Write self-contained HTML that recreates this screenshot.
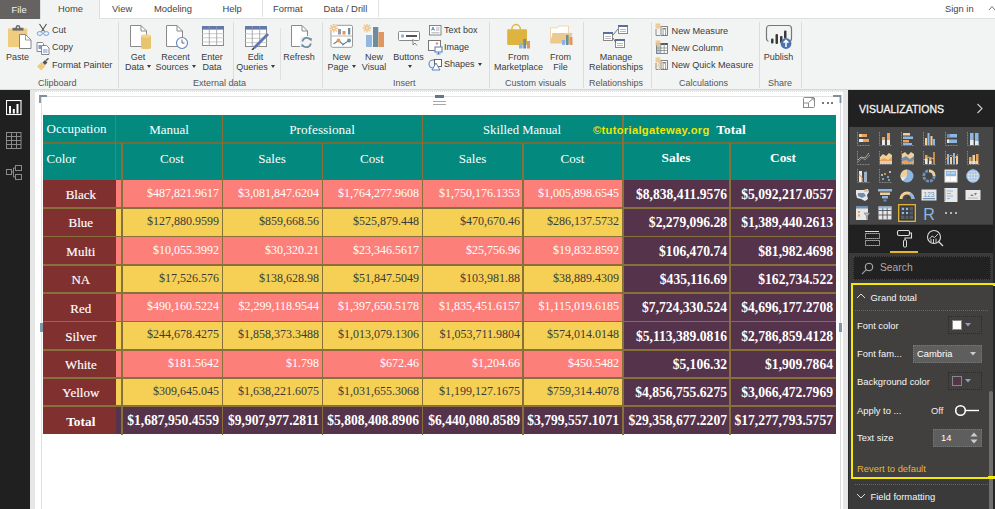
<!DOCTYPE html><html><head><meta charset="utf-8"><style>
*{margin:0;padding:0;box-sizing:border-box}
html,body{width:995px;height:509px;overflow:hidden;background:#fff;position:relative}
body{font-family:"Liberation Sans",sans-serif;color:#333}
.ab{position:absolute}
.t{position:absolute;white-space:nowrap;line-height:1}
.rb{font-size:9px;color:#3b3b3b}
.ser{font-family:"Liberation Serif",serif}
</style></head><body>
<div class="ab" style="left:0;top:0;width:995px;height:19px;background:#fff;border-bottom:1px solid #dde0e0"></div>
<div class="ab" style="left:0;top:0;width:40.5px;height:18.5px;background:#666262"></div>
<div class="t" style="left:11.5px;top:4.5px;font-size:9.4px;color:#f4f4f4">File</div>
<div class="ab" style="left:40px;top:0;width:60px;height:20px;background:#f2f4f4;border-left:1px solid #dde0e0;border-right:1px solid #dde0e0"></div>
<div class="t" style="left:58px;top:4px;font-size:9.4px;color:#444">Home</div>
<div class="t" style="left:112px;top:4px;font-size:9.4px;color:#444">View</div>
<div class="t" style="left:154px;top:4px;font-size:9.4px;color:#444">Modeling</div>
<div class="t" style="left:222.5px;top:4px;font-size:9.4px;color:#444">Help</div>
<div class="t" style="left:273px;top:4px;font-size:9.4px;color:#444">Format</div>
<div class="t" style="left:323.5px;top:4px;font-size:9.4px;color:#444">Data / Drill</div>
<div class="ab" style="left:262px;top:0;width:1px;height:17px;background:#e2e2e2"></div>
<div class="ab" style="left:378px;top:0;width:1px;height:17px;background:#e2e2e2"></div>
<div class="t" style="left:945px;top:3.5px;font-size:9.4px;color:#444">Sign in</div>
<svg class="ab" style="left:988px;top:5px" width="8" height="6"><path d="M1 5 L4 1.5 L7 5" stroke="#777" fill="none" stroke-width="1"/></svg>
<div class="ab" style="left:0;top:19px;width:995px;height:71px;background:#f2f4f4;border-bottom:1px solid #d6d8d8"></div>
<div class="ab" style="left:118px;top:22px;width:1px;height:66px;background:#dcdcdc"></div>
<div class="ab" style="left:232.5px;top:22px;width:1px;height:66px;background:#dcdcdc"></div>
<div class="ab" style="left:321.5px;top:22px;width:1px;height:66px;background:#dcdcdc"></div>
<div class="ab" style="left:488.5px;top:22px;width:1px;height:66px;background:#dcdcdc"></div>
<div class="ab" style="left:583px;top:22px;width:1px;height:66px;background:#dcdcdc"></div>
<div class="ab" style="left:650.5px;top:22px;width:1px;height:66px;background:#dcdcdc"></div>
<div class="ab" style="left:759px;top:22px;width:1px;height:66px;background:#dcdcdc"></div>
<div class="ab" style="left:801px;top:22px;width:1px;height:66px;background:#dcdcdc"></div>
<div class="ab" style="left:279.5px;top:28px;width:1px;height:52px;background:#e0e0e0"></div>
<div class="t rb" style="left:38px;top:78.6px;color:#555">Clipboard</div>
<div class="t rb" style="left:193px;top:78.6px;color:#555">External data</div>
<div class="t rb" style="left:393px;top:78.6px;color:#555">Insert</div>
<div class="t rb" style="left:505px;top:78.6px;color:#555">Custom visuals</div>
<div class="t rb" style="left:589px;top:78.6px;color:#555">Relationships</div>
<div class="t rb" style="left:679px;top:78.6px;color:#555">Calculations</div>
<div class="t rb" style="left:768px;top:78.6px;color:#555">Share</div>
<div class="t rb" style="left:-32.5px;width:100px;text-align:center;top:52.5px">Paste</div>
<div class="t rb" style="left:88px;width:100px;text-align:center;top:52.5px">Get</div>
<div class="t rb" style="left:88px;width:100px;text-align:center;top:62.7px">Data<span style="display:inline-block;width:0;height:0;border-left:2.6px solid transparent;border-right:2.6px solid transparent;border-top:3px solid #3b3b3b;margin-left:3px;vertical-align:1.5px"></span></div>
<div class="t rb" style="left:125.5px;width:100px;text-align:center;top:52.5px">Recent</div>
<div class="t rb" style="left:125.5px;width:100px;text-align:center;top:62.7px">Sources<span style="display:inline-block;width:0;height:0;border-left:2.6px solid transparent;border-right:2.6px solid transparent;border-top:3px solid #3b3b3b;margin-left:3px;vertical-align:1.5px"></span></div>
<div class="t rb" style="left:162px;width:100px;text-align:center;top:52.5px">Enter</div>
<div class="t rb" style="left:162px;width:100px;text-align:center;top:62.7px">Data</div>
<div class="t rb" style="left:205.5px;width:100px;text-align:center;top:52.5px">Edit</div>
<div class="t rb" style="left:205.5px;width:100px;text-align:center;top:62.7px">Queries<span style="display:inline-block;width:0;height:0;border-left:2.6px solid transparent;border-right:2.6px solid transparent;border-top:3px solid #3b3b3b;margin-left:3px;vertical-align:1.5px"></span></div>
<div class="t rb" style="left:249px;width:100px;text-align:center;top:52.5px">Refresh</div>
<div class="t rb" style="left:291.5px;width:100px;text-align:center;top:52.5px">New</div>
<div class="t rb" style="left:291.5px;width:100px;text-align:center;top:62.7px">Page<span style="display:inline-block;width:0;height:0;border-left:2.6px solid transparent;border-right:2.6px solid transparent;border-top:3px solid #3b3b3b;margin-left:3px;vertical-align:1.5px"></span></div>
<div class="t rb" style="left:324px;width:100px;text-align:center;top:52.5px">New</div>
<div class="t rb" style="left:324px;width:100px;text-align:center;top:62.7px">Visual</div>
<div class="t rb" style="left:358.5px;width:100px;text-align:center;top:52.5px">Buttons</div>
<div class="t rb" style="left:358.5px;width:100px;text-align:center;top:62.7px"><span style="display:inline-block;width:0;height:0;border-left:2.6px solid transparent;border-right:2.6px solid transparent;border-top:3px solid #3b3b3b;margin-left:3px;vertical-align:1.5px"></span></div>
<div class="t rb" style="left:468.5px;width:100px;text-align:center;top:52.5px">From</div>
<div class="t rb" style="left:468.5px;width:100px;text-align:center;top:62.7px">Marketplace</div>
<div class="t rb" style="left:510.5px;width:100px;text-align:center;top:52.5px">From</div>
<div class="t rb" style="left:510.5px;width:100px;text-align:center;top:62.7px">File</div>
<div class="t rb" style="left:566px;width:100px;text-align:center;top:52.5px">Manage</div>
<div class="t rb" style="left:566px;width:100px;text-align:center;top:62.7px">Relationships</div>
<div class="t rb" style="left:728.5px;width:100px;text-align:center;top:52.5px">Publish</div>
<div class="t rb" style="left:52px;top:25.5px">Cut</div>
<div class="t rb" style="left:52px;top:43px">Copy</div>
<div class="t rb" style="left:52px;top:60.6px"><span style="font-size:9.15px">Format Painter</span></div>
<div class="t rb" style="left:444px;top:25.5px">Text box</div>
<div class="t rb" style="left:444px;top:43px">Image</div>
<div class="t rb" style="left:444px;top:60px">Shapes<span style="display:inline-block;width:0;height:0;border-left:2.6px solid transparent;border-right:2.6px solid transparent;border-top:3px solid #3b3b3b;margin-left:3px;vertical-align:1.5px"></span></div>
<div class="t rb" style="left:671.5px;top:26.6px"><span style="font-size:9.2px">New Measure</span></div>
<div class="t rb" style="left:671.5px;top:43.6px">New Column</div>
<div class="t rb" style="left:671.5px;top:61px"><span style="font-size:9.1px">New Quick Measure</span></div>
<svg class="ab" style="left:7px;top:24px" width="26" height="26" viewBox="0 0 26 26"><rect x="1" y="4.5" width="19.3" height="18.5" fill="#efcc7e"/><rect x="5.5" y="3.8" width="11" height="2.8" fill="#6a6a6a"/><circle cx="11" cy="3.4" r="2.4" fill="#6a6a6a"/><circle cx="11" cy="3.4" r="0.9" fill="#f2f4f4"/><path d="M12.5 10.5 H18.5 L24 16 V24.5 H12.5 Z" fill="#fff" stroke="#858585" stroke-width="1"/><path d="M18.5 10.5 V16 H24" fill="none" stroke="#858585" stroke-width="0.8"/></svg>
<svg class="ab" style="left:36px;top:23px" width="14" height="14" viewBox="0 0 14 14"><path d="M3.5 1 L8.5 8.5 M10.5 1 L5.5 8.5" stroke="#505050" stroke-width="1.1"/><ellipse cx="3.8" cy="10.5" rx="2.6" ry="1.9" fill="none" stroke="#6f9fd8" stroke-width="1"/><ellipse cx="10.2" cy="10.5" rx="2.6" ry="1.9" fill="none" stroke="#6f9fd8" stroke-width="1"/></svg>
<svg class="ab" style="left:36px;top:41px" width="14" height="14" viewBox="0 0 14 14"><path d="M1 1.5 H6.5 L7.5 2.5 V10.5 H1Z" fill="#fff" stroke="#7a7a7a" stroke-width="0.9"/><rect x="2.5" y="4" width="2.5" height="4" fill="#5b83c4" opacity=".8"/><path d="M5.5 4.5 H10.5 L13 7 V13.5 H5.5Z" fill="#fff" stroke="#7a7a7a" stroke-width="0.9"/><path d="M7 9 h4.5 M7 11 h4.5" stroke="#5b83c4" stroke-width="0.9"/></svg>
<svg class="ab" style="left:36px;top:58px" width="14" height="13" viewBox="0 0 14 13"><path d="M1 8.5 L5.5 4 L9.5 8 L5 12.5Z" fill="#efcc7e"/><path d="M6.5 4.5 L9 2 L11.5 4.5 L9 7Z" fill="#555"/><path d="M10 2.5 L12.5 0.5" stroke="#555" stroke-width="1.6"/></svg>
<svg class="ab" style="left:129px;top:24px" width="24" height="25" viewBox="0 0 24 25"><path d="M1.5 1.5 H12 L17.5 7 V22.5 H1.5Z" fill="#fff" stroke="#8a8a8a"/><path d="M12 1.5 V7 H17.5" fill="none" stroke="#8a8a8a"/><rect x="12" y="12" width="10" height="12" fill="#e9c46e"/><ellipse cx="17" cy="12" rx="5" ry="1.8" fill="#f3d58e"/><ellipse cx="17" cy="24" rx="5" ry="1" fill="#e9c46e"/></svg>
<svg class="ab" style="left:165px;top:24px" width="25" height="26" viewBox="0 0 25 26"><path d="M1.5 1.5 H12 L17.5 7 V22.5 H1.5Z" fill="#fff" stroke="#8a8a8a"/><path d="M12 1.5 V7 H17.5" fill="none" stroke="#8a8a8a"/><circle cx="17" cy="19" r="5.5" fill="#fff" stroke="#5b83c4" stroke-width="1.1"/><path d="M17 15.5 V19 H19.5" stroke="#555" fill="none" stroke-width="0.9"/></svg>
<svg class="ab" style="left:201px;top:25px" width="24" height="23" viewBox="0 0 24 23"><rect x="1.5" y="1.5" width="21" height="19" fill="#fff" stroke="#8a8a8a"/><rect x="1" y="1" width="22" height="3.6" fill="#6279aa"/><path d="M1 8.7 H23" stroke="#bdbdbd" stroke-width="0.8"/><path d="M1 12.8 H23" stroke="#bdbdbd" stroke-width="0.8"/><path d="M1 16.9 H23" stroke="#bdbdbd" stroke-width="0.8"/><path d="M8.3 1 V21" stroke="#9a9a9a" stroke-width="0.8"/><path d="M15.7 1 V21" stroke="#9a9a9a" stroke-width="0.8"/></svg>
<svg class="ab" style="left:244px;top:25px" width="27" height="25" viewBox="0 0 27 25"><rect x="1.5" y="1.5" width="21" height="20" fill="#fff" stroke="#8a8a8a"/><rect x="1" y="1" width="22" height="3.6" fill="#6279aa"/><path d="M1 8.9 H23" stroke="#bdbdbd" stroke-width="0.8"/><path d="M1 13.3 H23" stroke="#bdbdbd" stroke-width="0.8"/><path d="M1 17.6 H23" stroke="#bdbdbd" stroke-width="0.8"/><path d="M8.3 1 V22" stroke="#9a9a9a" stroke-width="0.8"/><path d="M15.7 1 V22" stroke="#9a9a9a" stroke-width="0.8"/><path d="M24 9 L10 23" stroke="#5f78b0" stroke-width="2.8"/><path d="M10 23 L8 25" stroke="#333" stroke-width="1.5"/></svg>
<svg class="ab" style="left:290px;top:24px" width="24" height="26" viewBox="0 0 24 26"><path d="M1.5 1.5 H12 L17.5 7 V22.5 H1.5Z" fill="#fff" stroke="#8a8a8a"/><path d="M12 1.5 V7 H17.5" fill="none" stroke="#8a8a8a"/><rect x="10" y="12" width="13" height="13" fill="#f3f3f3"/><path d="M12.3 17.5 A4.6 4.6 0 0 1 20.6 15.8" fill="none" stroke="#6f8fa3" stroke-width="1.7"/><path d="M18.6 14.6 L22 14.2 L21.4 17.6Z" fill="#6f8fa3"/><path d="M20.9 19.5 A4.6 4.6 0 0 1 12.6 21.2" fill="none" stroke="#6f8fa3" stroke-width="1.7"/><path d="M14.6 22.4 L11.2 22.8 L11.8 19.4Z" fill="#6f8fa3"/></svg>
<svg class="ab" style="left:329px;top:24px" width="25" height="25" viewBox="0 0 25 25"><rect x="2" y="1.3" width="21.5" height="22" rx="1.5" fill="#fff" stroke="#9a9a9a"/><path d="M2.5 12 H23" stroke="#b5b5b5"/><rect x="9" y="5" width="3" height="5.5" fill="#8f9aa5"/><rect x="13.5" y="7" width="3" height="3.5" fill="#e3955e"/><rect x="19" y="4" width="2.3" height="6.5" fill="#6f8b9c"/><path d="M4.5 20 L9.5 16.5 L14 20.5 L20 16.5" stroke="#6a7f90" fill="none" stroke-width="1.1"/><circle cx="9.5" cy="16.5" r="2" fill="#e8995e"/><circle cx="20" cy="16.5" r="2" fill="#6f8fa3"/><circle cx="14" cy="20.5" r="1" fill="#6f8fa3"/><circle cx="4.8" cy="4.3" r="3.6" fill="#fff"/><path d="M6.20 4.30 L8.60 4.30 M5.79 5.29 L7.49 6.99 M4.80 5.70 L4.80 8.10 M3.81 5.29 L2.11 6.99 M3.40 4.30 L1.00 4.30 M3.81 3.31 L2.11 1.61 M4.80 2.90 L4.80 0.50 M5.79 3.31 L7.49 1.61 " stroke="#f0c68c" stroke-width="1.5" stroke-linecap="round"/></svg>
<svg class="ab" style="left:362px;top:24px" width="25" height="25" viewBox="0 0 25 25"><rect x="4" y="11" width="6" height="12" fill="#93b7de"/><rect x="11" y="3" width="5.3" height="20" fill="#6d8d9c"/><rect x="16.5" y="8" width="5.5" height="15" fill="#e3955e"/><path d="M6.40 4.00 L8.80 4.00 M5.99 4.99 L7.69 6.69 M5.00 5.40 L5.00 7.80 M4.01 4.99 L2.31 6.69 M3.60 4.00 L1.20 4.00 M4.01 3.01 L2.31 1.31 M5.00 2.60 L5.00 0.20 M5.99 3.01 L7.69 1.31 " stroke="#f0c68c" stroke-width="1.5" stroke-linecap="round"/></svg>
<svg class="ab" style="left:397px;top:30px" width="26" height="17" viewBox="0 0 26 17"><rect x="1.5" y="1.5" width="21" height="9" rx="1" fill="#fff" stroke="#888"/><rect x="4" y="4.5" width="3" height="3" fill="#8cb4df"/><rect x="9" y="5" width="11" height="2" fill="#555"/><path d="M16 9 L16 15 L18 13 L20 15.5" fill="#fff" stroke="#666" stroke-width="0.8"/></svg>
<svg class="ab" style="left:428px;top:24px" width="15" height="12" viewBox="0 0 15 12"><rect x="1.5" y="1.5" width="11.5" height="9.5" fill="#fff" stroke="#7a7a7a" stroke-width="0.9"/><path d="M3.5 6.5 L5 3 L6.5 6.5 M4 5.5 h2" stroke="#5b83c4" fill="none" stroke-width="0.9"/><path d="M8 4 h3.5 M8 6 h3.5 M3.5 8.8 h8" stroke="#999" stroke-width="0.8"/></svg>
<svg class="ab" style="left:428px;top:40px" width="16" height="15" viewBox="0 0 16 15"><rect x="0.5" y="0.5" width="12" height="10" fill="#fff" stroke="#777"/><circle cx="9" cy="3.5" r="1.3" fill="#e8965a"/><rect x="7" y="7" width="7" height="5" fill="#fff" stroke="#5b83c4" stroke-width="1.1"/><path d="M10.5 12 V14 M8.5 14 H12.5" stroke="#5b83c4"/></svg>
<svg class="ab" style="left:428px;top:58px" width="16" height="13" viewBox="0 0 16 13"><circle cx="5" cy="6" r="4" fill="none" stroke="#5b83c4" stroke-width="1.1"/><rect x="6.5" y="1.5" width="7" height="7" fill="#fff" stroke="#555" stroke-width="0.9"/><path d="M4 12 L8 5 L12 12Z" fill="#fff" stroke="#5b83c4" stroke-width="1"/></svg>
<svg class="ab" style="left:505px;top:22px" width="30" height="28" viewBox="0 0 30 28"><path d="M6.8 7.5 A4.3 5 0 0 1 15.4 7.5" fill="none" stroke="#dfb540" stroke-width="1.4"/><rect x="2.2" y="7.3" width="19.8" height="15.7" rx="1" fill="#deb440"/><rect x="14" y="21" width="3.6" height="5.5" fill="#8fb4dc"/><rect x="18.3" y="17" width="2.8" height="9.5" fill="#6d8d9c"/><rect x="22" y="19" width="3" height="7.5" fill="#e3955e"/></svg>
<svg class="ab" style="left:548px;top:24px" width="27" height="23" viewBox="0 0 27 23"><path d="M2.5 3.8 H9 L11 2 H20.5 V18 H2.5Z" fill="#fff" stroke="#efd7ac" stroke-width="1"/><path d="M2 19.5 L4.5 9 H24.5 L22 19.5Z" fill="#ecca8f"/><rect x="14" y="16" width="3" height="5" fill="#8fb4dc"/><rect x="18" y="11" width="2.6" height="10" fill="#6d8d9c"/><rect x="21.5" y="13" width="3" height="8" fill="#e3955e"/></svg>
<svg class="ab" style="left:603px;top:24px" width="27" height="25" viewBox="0 0 27 25"><rect x="15.5" y="1.5" width="9" height="8" fill="#fff" stroke="#888"/><rect x="15" y="1" width="10" height="2" fill="#5a6e9c"/><path d="M17 5.5 h6 M17 7.5 h6" stroke="#999" stroke-width="0.7"/><rect x="0.5" y="8.5" width="9" height="8" fill="#fff" stroke="#888"/><rect x="0" y="8" width="10" height="2" fill="#5a6e9c"/><path d="M2 12.5 h6 M2 14.5 h6" stroke="#999" stroke-width="0.7"/><rect x="12.5" y="15.5" width="9" height="8" fill="#fff" stroke="#888"/><rect x="12" y="15" width="10" height="2" fill="#5a6e9c"/><path d="M14 19.5 h6 M14 21.5 h6" stroke="#999" stroke-width="0.7"/><path d="M10 11 L15 5 M10 14 L13 19" stroke="#666" stroke-width="0.9"/></svg>
<svg class="ab" style="left:655px;top:23px" width="14" height="14" viewBox="0 0 14 14"><path d="M1 6 V12.5 H5" stroke="#8a8a8a" fill="none" stroke-width="1"/><rect x="6" y="3.5" width="6.5" height="9" fill="#fff" stroke="#777" stroke-width="0.9"/><rect x="7.3" y="5" width="4" height="1.6" fill="#888"/><path d="M7.5 8 h1.2 M10 8 h1.2 M7.5 10 h1.2 M10 10 h1.2 M7.5 11.8 h1.2 M10 11.8 h1.2" stroke="#555" stroke-width="1"/><path d="M3.80 3.00 L5.80 3.00 M3.57 3.57 L4.98 4.98 M3.00 3.80 L3.00 5.80 M2.43 3.57 L1.02 4.98 M2.20 3.00 L0.20 3.00 M2.43 2.43 L1.02 1.02 M3.00 2.20 L3.00 0.20 M3.57 2.43 L4.98 1.02 " stroke="#f0c68c" stroke-width="1.2" stroke-linecap="round"/></svg>
<svg class="ab" style="left:655px;top:40px" width="14" height="14" viewBox="0 0 14 14"><rect x="1.5" y="3.5" width="11" height="10" fill="#fff" stroke="#777" stroke-width="0.9"/><rect x="1.5" y="3" width="11" height="2" fill="#555"/><rect x="2" y="5" width="3.5" height="8" fill="#a6d4e6"/><path d="M1.5 8 h11 M1.5 10.5 h11 M5.8 3.5 v10 M9.2 3.5 v10" stroke="#888" stroke-width="0.8"/><path d="M3.80 3.00 L5.80 3.00 M3.57 3.57 L4.98 4.98 M3.00 3.80 L3.00 5.80 M2.43 3.57 L1.02 4.98 M2.20 3.00 L0.20 3.00 M2.43 2.43 L1.02 1.02 M3.00 2.20 L3.00 0.20 M3.57 2.43 L4.98 1.02 " stroke="#f0c68c" stroke-width="1.2" stroke-linecap="round"/></svg>
<svg class="ab" style="left:655px;top:57px" width="14" height="14" viewBox="0 0 14 14"><path d="M1 6 V12.5 H5" stroke="#8a8a8a" fill="none" stroke-width="1"/><rect x="6" y="3.5" width="6.5" height="9" fill="#fff" stroke="#777" stroke-width="0.9"/><rect x="7.3" y="5" width="4" height="1.6" fill="#888"/><path d="M7.5 8 h1.2 M10 8 h1.2 M7.5 10 h1.2 M10 10 h1.2 M7.5 11.8 h1.2 M10 11.8 h1.2" stroke="#555" stroke-width="1"/><path d="M3.80 3.00 L5.80 3.00 M3.57 3.57 L4.98 4.98 M3.00 3.80 L3.00 5.80 M2.43 3.57 L1.02 4.98 M2.20 3.00 L0.20 3.00 M2.43 2.43 L1.02 1.02 M3.00 2.20 L3.00 0.20 M3.57 2.43 L4.98 1.02 " stroke="#f0c68c" stroke-width="1.2" stroke-linecap="round"/><path d="M5 5 L3 9 H5 L3.5 13" stroke="#f0c68c" fill="none" stroke-width="1.1"/></svg>
<svg class="ab" style="left:764px;top:23px" width="30" height="28" viewBox="0 0 30 28"><rect x="2.5" y="2.5" width="25" height="16" rx="3" fill="none" stroke="#777" stroke-width="1.2"/><rect x="4.5" y="16" width="18" height="4" fill="#f2f4f4"/><rect x="7" y="15.5" width="2.5" height="5" rx="1" fill="#3a3a3a"/><rect x="11.5" y="11" width="2.5" height="10" rx="1" fill="#3a3a3a"/><rect x="16" y="13" width="2.5" height="7" rx="1" fill="#3a3a3a"/><rect x="20" y="7.5" width="2.5" height="8" rx="1" fill="#3a3a3a"/><circle cx="22" cy="20.5" r="5.4" fill="#4d72b3"/><path d="M22 24 V17.5 M19.6 19.8 L22 17.3 L24.4 19.8" stroke="#fff" stroke-width="1.5" fill="none"/></svg>
<div class="ab" style="left:0;top:90px;width:30px;height:419px;background:#202020"></div>
<svg class="ab" style="left:6px;top:100px" width="16" height="16" viewBox="0 0 16 16"><rect x="0.5" y="0.5" width="14.5" height="14" fill="none" stroke="#fff" stroke-width="1.1"/><rect x="3" y="6" width="2" height="7.5" fill="#fff"/><rect x="6.8" y="9" width="2" height="4.5" fill="#fff"/><rect x="10.5" y="4" width="2" height="9.5" fill="#fff"/></svg>
<svg class="ab" style="left:6px;top:132px" width="16" height="17" viewBox="0 0 16 17"><rect x="0.5" y="0.5" width="14.5" height="16" fill="none" stroke="#8a8a8a"/><path d="M0 4.5 H15 M0 8.5 H15 M0 12.5 H15 M5.5 0 V17 M10.5 0 V17" stroke="#8a8a8a"/></svg>
<svg class="ab" style="left:6px;top:165px" width="16" height="16" viewBox="0 0 16 16"><rect x="0.5" y="4.5" width="5" height="5" fill="none" stroke="#8a8a8a"/><rect x="9.5" y="0.5" width="6" height="5" fill="none" stroke="#8a8a8a"/><rect x="9.5" y="9.5" width="6" height="5" fill="none" stroke="#8a8a8a"/><path d="M5.5 7 H7.5 V3 H9.5 M7.5 7 V12 H9.5" fill="none" stroke="#8a8a8a"/></svg>
<div class="ab" style="left:30px;top:90px;width:819px;height:419px;background:#e6e6e6"></div>
<div class="ab" style="left:35px;top:91px;width:808px;height:418px;background:#fff;border-top:1px dotted #dedede"></div>
<div class="ab" style="left:41px;top:96px;width:800px;height:413px;border-left:1px solid #dfe1e1;border-top:1px solid #e2e2e2;border-right:1px solid #d9dbdb"></div>
<div class="ab" style="left:39.5px;top:323px;width:3px;height:9px;background:#7d98aa"></div><div class="ab" style="left:838.5px;top:323px;width:3px;height:9px;background:#7d98aa"></div>
<svg class="ab" style="left:39px;top:95px" width="9" height="9" viewBox="0 0 9 9"><path d="M1 8 V1 H8" stroke="#7f8f9c" stroke-width="1.8" fill="none"/></svg>
<svg class="ab" style="left:833px;top:95px" width="9" height="9" viewBox="0 0 9 9"><path d="M0 1 H7.5 V8" stroke="#7f8f9c" stroke-width="1.8" fill="none"/></svg>
<div class="ab" style="left:435px;top:95px;width:9px;height:3px;background:#62778a"></div>
<div class="ab" style="left:433px;top:101px;width:13px;height:1px;background:#a8a8a8"></div>
<div class="ab" style="left:433px;top:104px;width:13px;height:1px;background:#a8a8a8"></div>
<svg class="ab" style="left:803px;top:97px" width="13" height="12" viewBox="0 0 13 12"><rect x="0.5" y="0.5" width="11" height="10" rx="1" fill="none" stroke="#8a8a8a"/><rect x="0.5" y="6" width="5" height="4.5" fill="none" stroke="#8a8a8a"/><path d="M6 5 L11 1 M8 1 H11 V4" stroke="#8a8a8a" fill="none"/></svg>
<div class="ab" style="left:822.0px;top:102px;width:2px;height:2px;background:#777"></div>
<div class="ab" style="left:826.5px;top:102px;width:2px;height:2px;background:#777"></div>
<div class="ab" style="left:831.0px;top:102px;width:2px;height:2px;background:#777"></div>
<div class="ab" style="left:43px;top:115px;width:793px;height:65px;background:#03897e"></div>
<div class="ab" style="left:43px;top:180px;width:73px;height:27.69999999999999px;background:#80302f"></div>
<div class="ab" style="left:116px;top:180px;width:506px;height:27.69999999999999px;background:#fc7f7a"></div>
<div class="ab" style="left:622px;top:180px;width:214px;height:27.69999999999999px;background:#55344b"></div>
<div class="t ser" style="left:44.3px;width:73px;text-align:center;top:188.2px;font-size:13px;color:#fff;font-weight:normal;-webkit-text-stroke:0.15px #fff">Black</div>
<div class="t ser" style="right:776px;top:186.7px;font-size:12px;color:#fff;font-weight:normal">$487,821.9617</div>
<div class="t ser" style="right:676px;top:186.7px;font-size:12px;color:#fff;font-weight:normal">$3,081,847.6204</div>
<div class="t ser" style="right:576px;top:186.7px;font-size:12px;color:#fff;font-weight:normal">$1,764,277.9608</div>
<div class="t ser" style="right:475px;top:186.7px;font-size:12px;color:#fff;font-weight:normal">$1,750,176.1353</div>
<div class="t ser" style="right:376px;top:186.7px;font-size:12px;color:#fff;font-weight:normal">$1,005,898.6545</div>
<div class="t ser" style="right:268px;top:187.8px;font-size:13.6px;color:#fff;font-weight:bold">$8,838,411.9576</div>
<div class="t ser" style="right:162px;top:187.8px;font-size:13.6px;color:#fff;font-weight:bold">$5,092,217.0557</div>
<div class="ab" style="left:43px;top:207.7px;width:73px;height:28.80000000000001px;background:#80302f"></div>
<div class="ab" style="left:116px;top:207.7px;width:506px;height:28.80000000000001px;background:#f6d054"></div>
<div class="ab" style="left:622px;top:207.7px;width:214px;height:28.80000000000001px;background:#55344b"></div>
<div class="t ser" style="left:44.3px;width:73px;text-align:center;top:216.4px;font-size:13px;color:#fff;font-weight:normal;-webkit-text-stroke:0.15px #fff">Blue</div>
<div class="t ser" style="right:776px;top:214.9px;font-size:12px;color:#3a3a3a;font-weight:normal">$127,880.9599</div>
<div class="t ser" style="right:676px;top:214.9px;font-size:12px;color:#3a3a3a;font-weight:normal">$859,668.56</div>
<div class="t ser" style="right:576px;top:214.9px;font-size:12px;color:#3a3a3a;font-weight:normal">$525,879.448</div>
<div class="t ser" style="right:475px;top:214.9px;font-size:12px;color:#3a3a3a;font-weight:normal">$470,670.46</div>
<div class="t ser" style="right:376px;top:214.9px;font-size:12px;color:#3a3a3a;font-weight:normal">$286,137.5732</div>
<div class="t ser" style="right:268px;top:216.1px;font-size:13.6px;color:#fff;font-weight:bold">$2,279,096.28</div>
<div class="t ser" style="right:162px;top:216.1px;font-size:13.6px;color:#fff;font-weight:bold">$1,389,440.2613</div>
<div class="ab" style="left:43px;top:236.5px;width:73px;height:28.30000000000001px;background:#80302f"></div>
<div class="ab" style="left:116px;top:236.5px;width:506px;height:28.30000000000001px;background:#fc7f7a"></div>
<div class="ab" style="left:622px;top:236.5px;width:214px;height:28.30000000000001px;background:#55344b"></div>
<div class="t ser" style="left:44.3px;width:73px;text-align:center;top:245.0px;font-size:13px;color:#fff;font-weight:normal;-webkit-text-stroke:0.15px #fff">Multi</div>
<div class="t ser" style="right:776px;top:243.5px;font-size:12px;color:#fff;font-weight:normal">$10,055.3992</div>
<div class="t ser" style="right:676px;top:243.5px;font-size:12px;color:#fff;font-weight:normal">$30,320.21</div>
<div class="t ser" style="right:576px;top:243.5px;font-size:12px;color:#fff;font-weight:normal">$23,346.5617</div>
<div class="t ser" style="right:475px;top:243.5px;font-size:12px;color:#fff;font-weight:normal">$25,756.96</div>
<div class="t ser" style="right:376px;top:243.5px;font-size:12px;color:#fff;font-weight:normal">$19,832.8592</div>
<div class="t ser" style="right:268px;top:244.7px;font-size:13.6px;color:#fff;font-weight:bold">$106,470.74</div>
<div class="t ser" style="right:162px;top:244.7px;font-size:13.6px;color:#fff;font-weight:bold">$81,982.4698</div>
<div class="ab" style="left:43px;top:264.8px;width:73px;height:28.30000000000001px;background:#80302f"></div>
<div class="ab" style="left:116px;top:264.8px;width:506px;height:28.30000000000001px;background:#f6d054"></div>
<div class="ab" style="left:622px;top:264.8px;width:214px;height:28.30000000000001px;background:#55344b"></div>
<div class="t ser" style="left:44.3px;width:73px;text-align:center;top:273.3px;font-size:13px;color:#fff;font-weight:normal;-webkit-text-stroke:0.15px #fff">NA</div>
<div class="t ser" style="right:776px;top:271.8px;font-size:12px;color:#3a3a3a;font-weight:normal">$17,526.576</div>
<div class="t ser" style="right:676px;top:271.8px;font-size:12px;color:#3a3a3a;font-weight:normal">$138,628.98</div>
<div class="t ser" style="right:576px;top:271.8px;font-size:12px;color:#3a3a3a;font-weight:normal">$51,847.5049</div>
<div class="t ser" style="right:475px;top:271.8px;font-size:12px;color:#3a3a3a;font-weight:normal">$103,981.88</div>
<div class="t ser" style="right:376px;top:271.8px;font-size:12px;color:#3a3a3a;font-weight:normal">$38,889.4309</div>
<div class="t ser" style="right:268px;top:273.0px;font-size:13.6px;color:#fff;font-weight:bold">$435,116.69</div>
<div class="t ser" style="right:162px;top:273.0px;font-size:13.6px;color:#fff;font-weight:bold">$162,734.522</div>
<div class="ab" style="left:43px;top:293.1px;width:73px;height:28.299999999999955px;background:#80302f"></div>
<div class="ab" style="left:116px;top:293.1px;width:506px;height:28.299999999999955px;background:#fc7f7a"></div>
<div class="ab" style="left:622px;top:293.1px;width:214px;height:28.299999999999955px;background:#55344b"></div>
<div class="t ser" style="left:44.3px;width:73px;text-align:center;top:301.6px;font-size:13px;color:#fff;font-weight:normal;-webkit-text-stroke:0.15px #fff">Red</div>
<div class="t ser" style="right:776px;top:300.1px;font-size:12px;color:#fff;font-weight:normal">$490,160.5224</div>
<div class="t ser" style="right:676px;top:300.1px;font-size:12px;color:#fff;font-weight:normal">$2,299,118.9544</div>
<div class="t ser" style="right:576px;top:300.1px;font-size:12px;color:#fff;font-weight:normal">$1,397,650.5178</div>
<div class="t ser" style="right:475px;top:300.1px;font-size:12px;color:#fff;font-weight:normal">$1,835,451.6157</div>
<div class="t ser" style="right:376px;top:300.1px;font-size:12px;color:#fff;font-weight:normal">$1,115,019.6185</div>
<div class="t ser" style="right:268px;top:301.2px;font-size:13.6px;color:#fff;font-weight:bold">$7,724,330.524</div>
<div class="t ser" style="right:162px;top:301.2px;font-size:13.6px;color:#fff;font-weight:bold">$4,696,177.2708</div>
<div class="ab" style="left:43px;top:321.4px;width:73px;height:28.30000000000001px;background:#80302f"></div>
<div class="ab" style="left:116px;top:321.4px;width:506px;height:28.30000000000001px;background:#f6d054"></div>
<div class="ab" style="left:622px;top:321.4px;width:214px;height:28.30000000000001px;background:#55344b"></div>
<div class="t ser" style="left:44.3px;width:73px;text-align:center;top:329.8px;font-size:13px;color:#fff;font-weight:normal;-webkit-text-stroke:0.15px #fff">Silver</div>
<div class="t ser" style="right:776px;top:328.3px;font-size:12px;color:#3a3a3a;font-weight:normal">$244,678.4275</div>
<div class="t ser" style="right:676px;top:328.3px;font-size:12px;color:#3a3a3a;font-weight:normal">$1,858,373.3488</div>
<div class="t ser" style="right:576px;top:328.3px;font-size:12px;color:#3a3a3a;font-weight:normal">$1,013,079.1306</div>
<div class="t ser" style="right:475px;top:328.3px;font-size:12px;color:#3a3a3a;font-weight:normal">$1,053,711.9804</div>
<div class="t ser" style="right:376px;top:328.3px;font-size:12px;color:#3a3a3a;font-weight:normal">$574,014.0148</div>
<div class="t ser" style="right:268px;top:329.5px;font-size:13.6px;color:#fff;font-weight:bold">$5,113,389.0816</div>
<div class="t ser" style="right:162px;top:329.5px;font-size:13.6px;color:#fff;font-weight:bold">$2,786,859.4128</div>
<div class="ab" style="left:43px;top:349.7px;width:73px;height:28.100000000000023px;background:#80302f"></div>
<div class="ab" style="left:116px;top:349.7px;width:506px;height:28.100000000000023px;background:#fc7f7a"></div>
<div class="ab" style="left:622px;top:349.7px;width:214px;height:28.100000000000023px;background:#55344b"></div>
<div class="t ser" style="left:44.3px;width:73px;text-align:center;top:358.1px;font-size:13px;color:#fff;font-weight:normal;-webkit-text-stroke:0.15px #fff">White</div>
<div class="t ser" style="right:776px;top:356.6px;font-size:12px;color:#fff;font-weight:normal">$181.5642</div>
<div class="t ser" style="right:676px;top:356.6px;font-size:12px;color:#fff;font-weight:normal">$1.798</div>
<div class="t ser" style="right:576px;top:356.6px;font-size:12px;color:#fff;font-weight:normal">$672.46</div>
<div class="t ser" style="right:475px;top:356.6px;font-size:12px;color:#fff;font-weight:normal">$1,204.66</div>
<div class="t ser" style="right:376px;top:356.6px;font-size:12px;color:#fff;font-weight:normal">$450.5482</div>
<div class="t ser" style="right:268px;top:357.8px;font-size:13.6px;color:#fff;font-weight:bold">$5,106.32</div>
<div class="t ser" style="right:162px;top:357.8px;font-size:13.6px;color:#fff;font-weight:bold">$1,909.7864</div>
<div class="ab" style="left:43px;top:377.8px;width:73px;height:28.30000000000001px;background:#80302f"></div>
<div class="ab" style="left:116px;top:377.8px;width:506px;height:28.30000000000001px;background:#f6d054"></div>
<div class="ab" style="left:622px;top:377.8px;width:214px;height:28.30000000000001px;background:#55344b"></div>
<div class="t ser" style="left:44.3px;width:73px;text-align:center;top:386.3px;font-size:13px;color:#fff;font-weight:normal;-webkit-text-stroke:0.15px #fff">Yellow</div>
<div class="t ser" style="right:776px;top:384.8px;font-size:12px;color:#3a3a3a;font-weight:normal">$309,645.045</div>
<div class="t ser" style="right:676px;top:384.8px;font-size:12px;color:#3a3a3a;font-weight:normal">$1,638,221.6075</div>
<div class="t ser" style="right:576px;top:384.8px;font-size:12px;color:#3a3a3a;font-weight:normal">$1,031,655.3068</div>
<div class="t ser" style="right:475px;top:384.8px;font-size:12px;color:#3a3a3a;font-weight:normal">$1,199,127.1675</div>
<div class="t ser" style="right:376px;top:384.8px;font-size:12px;color:#3a3a3a;font-weight:normal">$759,314.4078</div>
<div class="t ser" style="right:268px;top:386.0px;font-size:13.6px;color:#fff;font-weight:bold">$4,856,755.6275</div>
<div class="t ser" style="right:162px;top:386.0px;font-size:13.6px;color:#fff;font-weight:bold">$3,066,472.7969</div>
<div class="ab" style="left:43px;top:406.1px;width:73px;height:28.399999999999977px;background:#80302f"></div>
<div class="ab" style="left:116px;top:406.1px;width:506px;height:28.399999999999977px;background:#55344b"></div>
<div class="ab" style="left:622px;top:406.1px;width:214px;height:28.399999999999977px;background:#55344b"></div>
<div class="t ser" style="left:44.3px;width:73px;text-align:center;top:414.6px;font-size:13.4px;color:#fff;font-weight:bold;">Total</div>
<div class="t ser" style="right:776px;top:414.3px;font-size:13.6px;color:#fff;font-weight:bold">$1,687,950.4559</div>
<div class="t ser" style="right:676px;top:414.3px;font-size:13.6px;color:#fff;font-weight:bold">$9,907,977.2811</div>
<div class="t ser" style="right:576px;top:414.3px;font-size:13.6px;color:#fff;font-weight:bold">$5,808,408.8906</div>
<div class="t ser" style="right:475px;top:414.3px;font-size:13.6px;color:#fff;font-weight:bold">$6,440,080.8589</div>
<div class="t ser" style="right:376px;top:414.3px;font-size:13.6px;color:#fff;font-weight:bold">$3,799,557.1071</div>
<div class="t ser" style="right:268px;top:414.3px;font-size:13.6px;color:#fff;font-weight:bold">$29,358,677.2207</div>
<div class="t ser" style="right:162px;top:414.3px;font-size:13.6px;color:#fff;font-weight:bold">$17,277,793.5757</div>
<div class="ab" style="left:43px;top:142.2px;width:793px;height:1.7px;background:#6f6e3c"></div>
<div class="ab" style="left:43px;top:206.8px;width:793px;height:1.8px;background:#88703a"></div>
<div class="ab" style="left:43px;top:235.6px;width:793px;height:1.8px;background:#88703a"></div>
<div class="ab" style="left:43px;top:263.9px;width:793px;height:1.8px;background:#88703a"></div>
<div class="ab" style="left:43px;top:292.2px;width:793px;height:1.8px;background:#88703a"></div>
<div class="ab" style="left:43px;top:320.5px;width:793px;height:1.8px;background:#88703a"></div>
<div class="ab" style="left:43px;top:348.8px;width:793px;height:1.8px;background:#88703a"></div>
<div class="ab" style="left:43px;top:376.9px;width:793px;height:1.8px;background:#88703a"></div>
<div class="ab" style="left:43px;top:405.2px;width:793px;height:1.8px;background:#88703a"></div>
<div class="ab" style="left:114.8px;top:115px;width:1.5px;height:65.0px;background:#88703a"></div>
<div class="ab" style="left:221.5px;top:115px;width:1.7px;height:319.5px;background:#88703a"></div>
<div class="ab" style="left:421.8px;top:115px;width:1.7px;height:319.5px;background:#88703a"></div>
<div class="ab" style="left:622.0px;top:115px;width:1.7px;height:319.5px;background:#88703a"></div>
<div class="ab" style="left:121.0px;top:143px;width:1.7px;height:291.5px;background:#88703a"></div>
<div class="ab" style="left:321.6px;top:143px;width:1.7px;height:291.5px;background:#88703a"></div>
<div class="ab" style="left:522.4px;top:143px;width:1.7px;height:291.5px;background:#88703a"></div>
<div class="ab" style="left:728.9px;top:143px;width:1.7px;height:291.5px;background:#88703a"></div>
<div class="t ser" style="left:46.5px;top:122.0px;font-size:13px;color:#fff;font-weight:normal">Occupation</div>
<div class="t ser" style="left:46.5px;top:151.5px;font-size:13px;color:#fff;font-weight:normal">Color</div>
<div class="t ser" style="left:116px;width:106px;text-align:center;top:123.0px;font-size:13px;color:#fff;font-weight:normal">Manual</div>
<div class="t ser" style="left:222px;width:200px;text-align:center;top:123.3px;font-size:13.3px;color:#fff;font-weight:normal">Professional</div>
<div class="t ser" style="left:422px;width:200px;text-align:center;top:123.7px;font-size:12.7px;color:#fff;font-weight:normal">Skilled Manual</div>
<div class="t ser" style="left:624px;width:214px;text-align:center;top:123.3px;font-size:13.4px;color:#fff;font-weight:bold">Total</div>
<div class="t ser" style="left:122px;width:100px;text-align:center;top:151.5px;font-size:13px;color:#fff;font-weight:normal">Cost</div>
<div class="t ser" style="left:222px;width:100px;text-align:center;top:151.5px;font-size:13px;color:#fff;font-weight:normal">Sales</div>
<div class="t ser" style="left:322px;width:100px;text-align:center;top:151.5px;font-size:13px;color:#fff;font-weight:normal">Cost</div>
<div class="t ser" style="left:422px;width:101px;text-align:center;top:151.5px;font-size:13px;color:#fff;font-weight:normal">Sales</div>
<div class="t ser" style="left:523px;width:99px;text-align:center;top:151.5px;font-size:13px;color:#fff;font-weight:normal">Cost</div>
<div class="t ser" style="left:622px;width:108px;text-align:center;top:151.3px;font-size:13.4px;color:#fff;font-weight:bold">Sales</div>
<div class="t ser" style="left:730px;width:106px;text-align:center;top:151.3px;font-size:13.4px;color:#fff;font-weight:bold">Cost</div>
<div class="t" style="left:593px;top:124.6px;font-size:11.2px;letter-spacing:0.3px;font-weight:bold;color:#f2e500">©tutorialgateway.org</div>
<div class="ab" style="left:848px;top:90px;width:147px;height:419px;background:#3a3a3a;border-left:1px solid #2a2a2a"></div>
<div class="ab" style="left:849px;top:90px;width:146px;height:37px;background:#212121"></div>
<div class="t" style="left:859px;top:104px;font-size:11px;color:#f4f4f4;-webkit-text-stroke:0.3px #f4f4f4;transform:scaleX(0.955);transform-origin:0 0">VISUALIZATIONS</div>
<svg class="ab" style="left:976px;top:103px" width="8" height="11" viewBox="0 0 8 11"><path d="M1.5 1 L6 5.5 L1.5 10" stroke="#ccc" fill="none" stroke-width="1.1"/></svg>
<div class="ab" style="left:850px;top:127px;width:143px;height:97px;background:#464646"></div>
<svg class="ab" style="left:855px;top:131px" width="16" height="16" viewBox="0 0 16 16"><path d="M2.5 1 V14.5 H15" stroke="#9a9a9a" stroke-width="0.8" fill="none" stroke-dasharray="1 .6"/><rect x="4" y="3" width="8" height="3" fill="#e8a25c"/><rect x="4" y="3" width="3" height="3" fill="#f3cf98"/><rect x="4" y="8" width="10" height="3" fill="#e8a25c"/><rect x="4" y="8" width="4" height="3" fill="#e8e8e8"/></svg>
<svg class="ab" style="left:877px;top:131px" width="16" height="16" viewBox="0 0 16 16"><path d="M2.5 1 V14.5 H15" stroke="#9a9a9a" stroke-width="0.8" fill="none" stroke-dasharray="1 .6"/><rect x="5" y="6" width="3" height="8" fill="#e8a25c"/><rect x="5" y="9" width="3" height="5" fill="#e8e8e8"/><rect x="10" y="2" width="3" height="12" fill="#e8a25c"/><rect x="10" y="9" width="3" height="5" fill="#e8e8e8"/></svg>
<svg class="ab" style="left:899px;top:131px" width="16" height="16" viewBox="0 0 16 16"><path d="M2.5 1 V14.5 H15" stroke="#9a9a9a" stroke-width="0.8" fill="none" stroke-dasharray="1 .6"/><rect x="4" y="2" width="7" height="2.5" fill="#f3cf98"/><rect x="4" y="5.5" width="10" height="2.5" fill="#8db6e2"/><rect x="4" y="9" width="6" height="2.5" fill="#e8a25c"/><rect x="4" y="12" width="9" height="2" fill="#8db6e2"/></svg>
<svg class="ab" style="left:921px;top:131px" width="16" height="16" viewBox="0 0 16 16"><path d="M2.5 1 V14.5 H15" stroke="#9a9a9a" stroke-width="0.8" fill="none" stroke-dasharray="1 .6"/><rect x="4" y="7" width="2" height="7" fill="#f3cf98"/><rect x="6.5" y="2" width="2" height="12" fill="#8db6e2"/><rect x="9.5" y="5" width="2" height="9" fill="#f3cf98"/><rect x="12" y="8" width="2" height="6" fill="#8db6e2"/></svg>
<svg class="ab" style="left:943px;top:131px" width="16" height="16" viewBox="0 0 16 16"><path d="M2.5 1 V14.5 H15" stroke="#9a9a9a" stroke-width="0.8" fill="none" stroke-dasharray="1 .6"/><rect x="4" y="3" width="10" height="3.5" fill="#8db6e2"/><rect x="4" y="3" width="3" height="3.5" fill="#6d8fb0"/><rect x="4" y="8.5" width="10" height="3.5" fill="#8db6e2"/><rect x="4" y="8.5" width="2" height="3.5" fill="#e8e8e8"/></svg>
<svg class="ab" style="left:965px;top:131px" width="16" height="16" viewBox="0 0 16 16"><path d="M2.5 1 V14.5 H15" stroke="#9a9a9a" stroke-width="0.8" fill="none" stroke-dasharray="1 .6"/><rect x="5" y="2" width="3.5" height="12" fill="#8db6e2"/><rect x="5" y="9" width="3.5" height="5" fill="#e8e8e8"/><rect x="10" y="2" width="3.5" height="12" fill="#8db6e2"/><rect x="10" y="10" width="3.5" height="4" fill="#e8e8e8"/></svg>
<svg class="ab" style="left:855px;top:149.5px" width="16" height="16" viewBox="0 0 16 16"><path d="M2.5 1 V14.5 H15" stroke="#9a9a9a" stroke-width="0.8" fill="none" stroke-dasharray="1 .6"/><path d="M3 12 L7 8 L10 10 L15 5" stroke="#6d8fb0" fill="none" stroke-width="1"/><path d="M3 10 L6 7 L10 8 L14 3" stroke="#e8a25c" fill="none" stroke-width="1"/></svg>
<svg class="ab" style="left:877px;top:149.5px" width="16" height="16" viewBox="0 0 16 16"><path d="M2.5 1 V14.5 H15" stroke="#9a9a9a" stroke-width="0.8" fill="none" stroke-dasharray="1 .6"/><path d="M3 14 V7 L6 4 L9 6 L12 3 L15 5 V14Z" fill="#f3cf98"/><path d="M3 14 V10 L7 8 L11 10 L15 7 V14Z" fill="#e8a25c"/><rect x="3" y="11" width="12" height="3" fill="#e8e8e8" opacity="0.6"/></svg>
<svg class="ab" style="left:899px;top:149.5px" width="16" height="16" viewBox="0 0 16 16"><path d="M2.5 1 V14.5 H15" stroke="#9a9a9a" stroke-width="0.8" fill="none" stroke-dasharray="1 .6"/><path d="M3 14 V4 L6 2 L9 5 L12 2 L15 4 V14Z" fill="#f3cf98"/><path d="M3 14 V8 L7 6 L11 9 L15 6 V14Z" fill="#6d8fb0"/><path d="M3 14 V11 L7 10 L11 12 L15 10 V14Z" fill="#e8a25c"/></svg>
<svg class="ab" style="left:921px;top:149.5px" width="16" height="16" viewBox="0 0 16 16"><path d="M2.5 1 V14.5 H15" stroke="#9a9a9a" stroke-width="0.8" fill="none" stroke-dasharray="1 .6"/><rect x="4" y="5" width="2.5" height="9" fill="#e8a25c"/><rect x="8" y="8" width="2.5" height="6" fill="#e8a25c"/><rect x="4" y="9" width="2.5" height="5" fill="#e8e8e8"/><rect x="8" y="11" width="2.5" height="3" fill="#e8e8e8"/><path d="M13 2 V14" stroke="#e8a25c" stroke-width="1.5"/><path d="M3 10 L8 7 L13 9" stroke="#f3cf98" fill="none" stroke-width="0.8"/></svg>
<svg class="ab" style="left:943px;top:149.5px" width="16" height="16" viewBox="0 0 16 16"><path d="M2.5 1 V14.5 H15" stroke="#9a9a9a" stroke-width="0.8" fill="none" stroke-dasharray="1 .6"/><rect x="4" y="4" width="2" height="10" fill="#8db6e2"/><rect x="7" y="7" width="2" height="7" fill="#f3cf98"/><rect x="10" y="3" width="2" height="11" fill="#8db6e2"/><rect x="13" y="6" width="2" height="8" fill="#f3cf98"/><path d="M3 9 L8 5 L12 8 L15 4" stroke="#e8a25c" fill="none" stroke-width="0.9"/></svg>
<svg class="ab" style="left:965px;top:149.5px" width="16" height="16" viewBox="0 0 16 16"><path d="M2.5 1 V14.5 H15" stroke="#9a9a9a" stroke-width="0.8" fill="none" stroke-dasharray="1 .6"/><rect x="4" y="7" width="2.5" height="7" fill="#e8a25c"/><rect x="7.5" y="5" width="2.5" height="9" fill="#f3cf98"/><rect x="11" y="4" width="2.5" height="10" fill="#e8a25c"/><rect x="4" y="11" width="9" height="3" fill="#e8e8e8" opacity=".7"/></svg>
<svg class="ab" style="left:855px;top:168px" width="16" height="16" viewBox="0 0 16 16"><path d="M2.5 1 V14.5 H15" stroke="#9a9a9a" stroke-width="0.8" fill="none" stroke-dasharray="1 .6"/><rect x="4" y="3" width="3" height="11" fill="#e8e8e8"/><path d="M4 6 L7 10 V14" stroke="#e8a25c" fill="none" stroke-width="1.2"/><rect x="9" y="4" width="3" height="10" fill="#8db6e2"/><path d="M11 3 V14" stroke="#e8a25c" stroke-width="0.8"/></svg>
<svg class="ab" style="left:877px;top:168px" width="16" height="16" viewBox="0 0 16 16"><path d="M2.5 1 V14.5 H15" stroke="#9a9a9a" stroke-width="0.8" fill="none" stroke-dasharray="1 .6"/><circle cx="6" cy="11" r="1.1" fill="#8db6e2"/><circle cx="8" cy="6" r="1.1" fill="#e8a25c"/><circle cx="11" cy="9" r="1.1" fill="#8db6e2"/><circle cx="13" cy="4" r="1.1" fill="#f3cf98"/><circle cx="5" cy="7" r="0.9" fill="#e8e8e8"/><circle cx="12" cy="12" r="1" fill="#8db6e2"/></svg>
<svg class="ab" style="left:899px;top:168px" width="16" height="16" viewBox="0 0 16 16"><circle cx="8" cy="8" r="6.5" fill="#8db6e2"/><path d="M8 8 V1.5 A6.5 6.5 0 0 0 1.6 9.5Z" fill="#f3cf98"/><path d="M8 8 L1.6 9.5 A6.5 6.5 0 0 0 4 13Z" fill="#e8e8e8"/></svg>
<svg class="ab" style="left:921px;top:168px" width="16" height="16" viewBox="0 0 16 16"><circle cx="8" cy="8" r="5.2" fill="none" stroke="#6d8fb0" stroke-width="2.8" stroke-dasharray="3 1"/><path d="M8 2.8 A5.2 5.2 0 0 1 13.2 8" fill="none" stroke="#f3cf98" stroke-width="2.8"/></svg>
<svg class="ab" style="left:943px;top:168px" width="16" height="16" viewBox="0 0 16 16"><rect x="1.5" y="1.5" width="13" height="13" fill="#e8e8e8"/><rect x="3" y="3" width="10" height="5" fill="#8db6e2"/><rect x="3" y="9" width="4" height="4" fill="#fff"/><rect x="8" y="9" width="5" height="4" fill="#fff"/><path d="M4 5 h3 M8 5 h4" stroke="#fff" stroke-width="0.8"/></svg>
<svg class="ab" style="left:965px;top:168px" width="16" height="16" viewBox="0 0 16 16"><circle cx="8" cy="8" r="6.3" fill="#e8e8e8"/><circle cx="8" cy="8" r="6.3" fill="none" stroke="#8db6e2" stroke-width="1"/><path d="M1.7 8 H14.3 M8 1.7 V14.3 M2.8 5 H13.2 M2.8 11 H13.2" stroke="#8db6e2" stroke-width="0.8"/><ellipse cx="8" cy="8" rx="3" ry="6.3" fill="none" stroke="#8db6e2" stroke-width="0.8"/></svg>
<svg class="ab" style="left:855px;top:186.5px" width="16" height="16" viewBox="0 0 16 16"><path d="M1 3 H8 L13 2 L14 5 L12 8 L13 12 L10 14 L6 12 L2 11 L1 7Z" fill="#e8e8e8"/><path d="M3 6 H9 L11 9 L7 11 L3 9Z" fill="#6d8fb0"/><path d="M9 4 h4" stroke="#e8a25c" stroke-width="1"/></svg>
<svg class="ab" style="left:877px;top:186.5px" width="16" height="16" viewBox="0 0 16 16"><rect x="1" y="2" width="14" height="2.5" fill="#8db6e2"/><rect x="3" y="5.5" width="10" height="2.5" fill="#f3cf98"/><rect x="5" y="9" width="6" height="2.5" fill="#8db6e2"/><rect x="6.5" y="12.5" width="3" height="2" fill="#6d8fb0"/></svg>
<svg class="ab" style="left:899px;top:186.5px" width="16" height="16" viewBox="0 0 16 16"><path d="M2 12 A6 6 0 0 1 14 12" fill="none" stroke="#f3cf98" stroke-width="3"/><path d="M10.5 6.6 A6 6 0 0 1 14 12" fill="none" stroke="#8db6e2" stroke-width="3"/><path d="M8 12 L10 9" stroke="#333" stroke-width="1"/></svg>
<svg class="ab" style="left:921px;top:186.5px" width="16" height="16" viewBox="0 0 16 16"><rect x="0.5" y="2.5" width="15" height="11" fill="#e8e8e8"/><text x="8" y="9.5" font-size="6.5" text-anchor="middle" fill="#6d8fb0" font-family="Liberation Sans">123</text><rect x="2" y="11" width="12" height="1.2" fill="#6d8fb0"/></svg>
<svg class="ab" style="left:943px;top:186.5px" width="16" height="16" viewBox="0 0 16 16"><rect x="1.5" y="1" width="13" height="14" fill="#e8e8e8"/><path d="M4 4 h6 M4 6.5 h4 M4 9 h6 M4 11.5 h3" stroke="#8db6e2" stroke-width="1.1"/><path d="M2.5 2 V14" stroke="#bbb" stroke-width="0.8"/></svg>
<svg class="ab" style="left:965px;top:186.5px" width="16" height="16" viewBox="0 0 16 16"><rect x="0.5" y="3" width="15" height="10" fill="#e8e8e8"/><path d="M5 9 L7 7 L9 9Z" fill="#5aa05a"/><path d="M9 6 L12 6 L10.5 8.5Z" fill="#d9534f"/><path d="M3 11 h10" stroke="#aaa" stroke-width="0.8"/></svg>
<svg class="ab" style="left:855px;top:205px" width="16" height="16" viewBox="0 0 16 16"><rect x="1" y="1" width="12" height="14" fill="#e8e8e8"/><rect x="1" y="1" width="12" height="2.5" fill="#6d8fb0"/><rect x="3" y="6" width="2" height="2" fill="#e8a25c"/><rect x="3" y="9.5" width="2" height="2" fill="#e8a25c"/><path d="M9 8 H15 L12.5 11 V15 L11.5 14 V11Z" fill="#bbb" stroke="#666" stroke-width="0.5"/></svg>
<svg class="ab" style="left:877px;top:205px" width="16" height="16" viewBox="0 0 16 16"><rect x="1.5" y="1.5" width="13" height="13" fill="#e8e8e8"/><path d="M1.5 5.5 H14.5 M1.5 10 H14.5 M5.8 1.5 V14.5 M10.2 1.5 V14.5" stroke="#555" stroke-width="0.9"/><rect x="1.5" y="1.5" width="13" height="2" fill="#8db6e2"/></svg>
<svg class="ab" style="left:898px;top:204px" width="18" height="18" viewBox="0 0 18 18"><rect x="0" y="0" width="18" height="18" fill="#3a3a3a"/><rect x="3" y="3" width="12" height="12" fill="#555d66"/><path d="M3 7 H15 M3 11 H15 M7 3 V15 M11 3 V15" stroke="#333" stroke-width="0.9"/><rect x="4" y="4" width="2" height="2" fill="#8db6e2"/><rect x="8" y="4" width="2" height="2" fill="#8db6e2"/><rect x="4" y="8" width="2" height="2" fill="#8db6e2"/><rect x="8" y="8" width="2" height="2" fill="#8db6e2"/><rect x="0.7" y="0.7" width="16.6" height="16.6" fill="none" stroke="#e6b73a" stroke-width="1.3"/></svg>
<svg class="ab" style="left:921px;top:205px" width="16" height="16" viewBox="0 0 16 16"><text x="8" y="14.5" font-size="16" text-anchor="middle" fill="#8db6e2" font-family="Liberation Sans">R</text></svg>
<svg class="ab" style="left:943px;top:205px" width="16" height="16" viewBox="0 0 16 16"><circle cx="3" cy="8" r="1" fill="#ddd"/><circle cx="8" cy="8" r="1" fill="#ddd"/><circle cx="13" cy="8" r="1" fill="#ddd"/></svg>
<div class="ab" style="left:849px;top:225px;width:146px;height:28px;background:#212121"></div>
<svg class="ab" style="left:864px;top:230px" width="18" height="17" viewBox="0 0 18 17"><path d="M1 1.5 H15" stroke="#ddd" stroke-width="1"/><rect x="1.5" y="3.5" width="14" height="5" fill="none" stroke="#ddd" stroke-dasharray="1.2 .8"/><rect x="1.5" y="10.5" width="14" height="5" fill="none" stroke="#ddd" stroke-dasharray="1.2 .8"/></svg>
<svg class="ab" style="left:896px;top:229px" width="18" height="19" viewBox="0 0 18 19"><rect x="1.5" y="1.5" width="12" height="5" rx="1.5" fill="none" stroke="#ddd" stroke-width="1.1"/><path d="M13.5 4 H15.5 V9 H9 V11" stroke="#ddd" fill="none" stroke-width="1.1"/><rect x="7.5" y="11" width="3" height="7" rx="1" fill="none" stroke="#ddd" stroke-width="1"/></svg>
<svg class="ab" style="left:926px;top:229px" width="19" height="19" viewBox="0 0 19 19"><circle cx="8" cy="8" r="6.5" fill="none" stroke="#ddd" stroke-width="1.1"/><path d="M12.5 12.5 L17 17" stroke="#ddd" stroke-width="1.3"/><path d="M3.5 10 L6 7 L8.5 8.5 L12 5" stroke="#ddd" fill="none" stroke-width="0.9"/><path d="M5 10 V13 M7.5 10 V14 M10 9.5 V13.5" stroke="#ddd" stroke-width="0.9"/></svg>
<div class="ab" style="left:890px;top:251px;width:28px;height:2px;background:#e9b530"></div>
<div class="ab" style="left:852.5px;top:256px;width:138px;height:24px;background:#222;border:1px dotted #444"></div>
<svg class="ab" style="left:861px;top:262px" width="13" height="13" viewBox="0 0 13 13"><circle cx="8" cy="5" r="3.8" fill="none" stroke="#bbb" stroke-width="1"/><path d="M5.3 7.7 L1 12" stroke="#8aa0c8" stroke-width="1.1"/></svg>
<div class="t" style="left:880px;top:263px;font-size:10.3px;color:#aaa">Search</div>
<div class="ab" style="left:851px;top:283px;width:147px;height:196px;border:2.6px solid #f2e80c;background:#41403e"></div>
<svg class="ab" style="left:856px;top:292px" width="10" height="7" viewBox="0 0 10 7"><path d="M1 6 L5 2 L9 6" stroke="#ddd" fill="none" stroke-width="1"/></svg>
<div class="t" style="left:870.5px;top:292.5px;font-size:9.4px;color:#f6f6f6">Grand total</div>
<div class="ab" style="left:855px;top:310px;width:133px;height:1px;border-top:1px dotted #666"></div>
<div class="t" style="left:857px;top:320.5px;font-size:9.4px;color:#f6f6f6">Font color</div>
<div class="t" style="left:857px;top:348.8px;font-size:9.4px;color:#f6f6f6">Font fam...</div>
<div class="t" style="left:857px;top:376.9px;font-size:9.4px;color:#f6f6f6">Background color</div>
<div class="t" style="left:857px;top:405.6px;font-size:9.4px;color:#f6f6f6">Apply to ...</div>
<div class="t" style="left:857px;top:432.9px;font-size:9.4px;color:#f6f6f6">Text size</div>
<div class="ab" style="left:947.5px;top:316px;width:34px;height:18px;border:1px dotted #2a2a2a;background:transparent"></div>
<div class="ab" style="left:952px;top:320px;width:10px;height:10px;background:#fff;border:1px solid #888"></div>
<svg class="ab" style="left:965px;top:323px" width="7" height="4" viewBox="0 0 7 4"><path d="M0 0 H6 L3 3.5Z" fill="#8aa0c8"/></svg>
<div class="ab" style="left:947.5px;top:372px;width:34px;height:18px;border:1px dotted #2a2a2a;background:transparent"></div>
<div class="ab" style="left:952px;top:376px;width:10px;height:10px;background:#55344b;border:1px solid #888"></div>
<svg class="ab" style="left:965px;top:379px" width="7" height="4" viewBox="0 0 7 4"><path d="M0 0 H6 L3 3.5Z" fill="#8aa0c8"/></svg>
<div class="ab" style="left:913px;top:345px;width:69px;height:18px;background:#5e5e5e;border:1px dotted #777"></div>
<div class="t" style="left:917px;top:348.8px;font-size:9.4px;color:#fff">Cambria</div>
<svg class="ab" style="left:970px;top:352px" width="7" height="4" viewBox="0 0 7 4"><path d="M0 0 H6 L3 3.5Z" fill="#ccc"/></svg>
<div class="t" style="left:931px;top:405.6px;font-size:9.4px;color:#eee">Off</div>
<svg class="ab" style="left:954px;top:404px" width="26" height="13" viewBox="0 0 26 13"><circle cx="6.5" cy="6.5" r="4.8" fill="none" stroke="#fff" stroke-width="1.6"/><path d="M11.3 6.5 H25" stroke="#fff" stroke-width="1.4"/></svg>
<div class="ab" style="left:933px;top:428.5px;width:49px;height:18px;background:#5e5e5e;border:1px dotted #777"></div>
<div class="t" style="left:941px;top:432.9px;font-size:9.4px;color:#fff">14</div>
<svg class="ab" style="left:970px;top:431px" width="8" height="14" viewBox="0 0 8 14"><path d="M0.5 5.5 L4 1.5 L7.5 5.5Z M0.5 8.5 L4 12.5 L7.5 8.5Z" fill="#ccc"/></svg>
<div class="t" style="left:857px;top:464.4px;font-size:9.4px;color:#e2b63a">Revert to default</div>
<div class="ab" style="left:988.5px;top:391px;width:4.3px;height:118px;background:#6f6f6f;border-radius:2px 2px 0 0"></div>
<div class="ab" style="left:855px;top:484px;width:133px;height:1px;border-top:1px dotted #666"></div>
<svg class="ab" style="left:856px;top:493px" width="10" height="7" viewBox="0 0 10 7"><path d="M1 1 L5 5 L9 1" stroke="#ddd" fill="none" stroke-width="1"/></svg>
<div class="t" style="left:870.5px;top:491.8px;font-size:9.4px;color:#f6f6f6">Field formatting</div>
<div class="ab" style="left:993px;top:127px;width:2px;height:382px;background:#262626"></div>
<div class="ab" style="left:993px;top:283px;width:2px;height:2.6px;background:#f2e80c"></div>
<div class="ab" style="left:988px;top:476.4px;width:7px;height:2.6px;background:#f2e80c"></div>
</body></html>
